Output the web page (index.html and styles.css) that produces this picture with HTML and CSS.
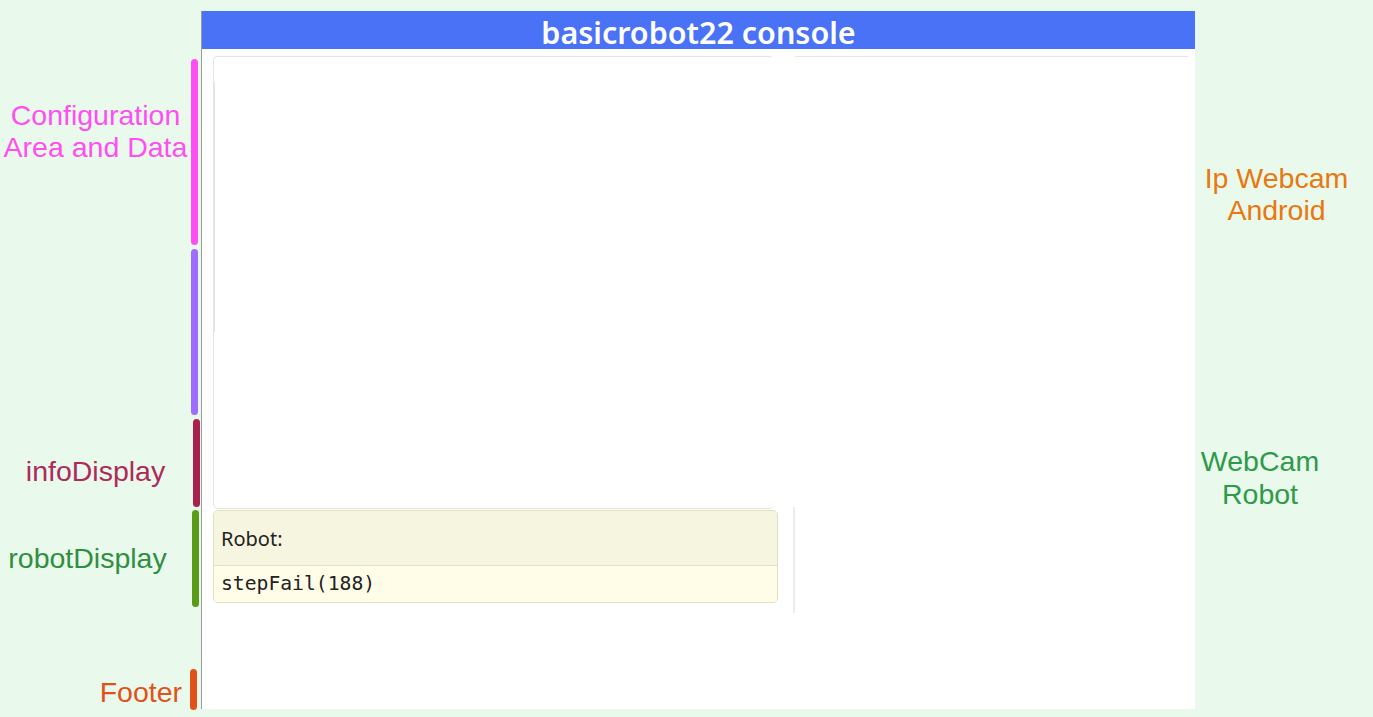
FILE: index.html
```html
<!DOCTYPE html>
<html lang="en">
<head>
<meta charset="utf-8">
<title>basicrobot22 console</title>
<link rel="stylesheet" href="styles.css">
</head>
<body>
<div class="page">
  <aside class="notes-left">
    <div class="note note-config">
      <div class="note-label">Configuration<br>Area and Data</div>
      <div class="note-bar"></div>
    </div>
    <div class="note note-data">
      <div class="note-label"></div>
      <div class="note-bar"></div>
    </div>
    <div class="note note-info">
      <div class="note-label">infoDisplay</div>
      <div class="note-bar"></div>
    </div>
    <div class="note note-robot">
      <div class="note-label">robotDisplay</div>
      <div class="note-bar"></div>
    </div>
    <div class="note note-footer">
      <div class="note-label">Footer</div>
      <div class="note-bar"></div>
    </div>
  </aside>

  <main class="console">
    <header class="console-header">basicrobot22 console</header>
    <div class="console-body">
      <section class="col-left">
        <div class="config-card">
          <div class="config-inner"></div>
        </div>
        <div class="robot-card">
          <div class="robot-head">Robot:</div>
          <div class="robot-msg">stepFail(188)</div>
        </div>
      </section>
      <section class="col-right">
        <div class="cam-top"></div>
        <div class="cam-bottom"></div>
      </section>
    </div>
  </main>

  <aside class="notes-right">
    <div class="rnote rnote-ip">Ip Webcam<br>Android</div>
    <div class="rnote rnote-robot">WebCam<br>Robot</div>
  </aside>
</div>
</body>
</html>
```

FILE: styles.css
```css
html, body {
  margin: 0;
  padding: 0;
}
body {
  background: #e9f9ec;
  width: 1373px;
  height: 717px;
  overflow: hidden;
}
.page {
  display: grid;
  grid-template-columns: 201px 994px 1fr;
  padding-top: 11px;
  height: 706px;
  box-sizing: border-box;
}

/* left annotations */
.notes-left {
  display: flex;
  flex-direction: column;
  padding-top: 48px;
  font-family: "Liberation Sans", Arial, sans-serif;
  font-size: 28.5px;
  line-height: 32px;
}
.note {
  display: flex;
}
.note-label {
  width: 191px;
  text-align: center;
}
.note-bar {
  width: 7px;
  border-radius: 4px;
}
.note-config { height: 186px; }
.note-config .note-label { padding-top: 40px; color: #ff4ff2; }
.note-config .note-bar { background: #ff4ff2; }

.note-data { height: 166px; margin-top: 4px; }
.note-data .note-bar { background: #9e6cff; }

.note-info { height: 88px; margin-top: 4px; }
.note-info .note-label { padding-top: 36px; color: #ad2a5a; }
.note-info .note-bar { background: #a8214f; margin-left: 2px; }

.note-robot { height: 97px; margin-top: 3px; }
.note-robot .note-label { padding-top: 32px; color: #2f8f40; width: 175px; margin-right: 16px; }
.note-robot .note-bar { background: #5b9b1a; margin-left: 1px; }

.note-footer { height: 41px; margin-top: 62px; }
.note-footer .note-label { padding-top: 7px; color: #e0521a; text-align: right; width: 182px; margin-right: 8px; }
.note-footer .note-bar { background: #e0521a; }

/* console */
.console {
  background: #ffffff;
  border-left: 1px solid #9c9c9c;
  height: 698px;
  display: flex;
  flex-direction: column;
}
.console-header {
  height: 38px;
  background: #4a72f7;
  color: #ffffff;
  font-family: "Noto Sans", "Open Sans", sans-serif;
  font-weight: 600;
  font-size: 30.5px;
  line-height: 43px;
  text-align: center;
}
.console-body {
  display: flex;
  gap: 15px;
  padding: 7px 0 0 11px;
}
.col-left {
  width: 565px;
  display: flex;
  flex-direction: column;
}
.config-card {
  width: 561px;
  height: 453px;
  box-sizing: border-box;
  border: 1px solid #e4e4e4;
  border-right-color: transparent;
  border-bottom-color: #e8e5cc;
  border-radius: 5px;
  padding-top: 25px;
}
.config-inner {
  height: 250px;
  border-left: 1px solid #e6e5dc;
}
.robot-card {
  margin-top: 1px;
  width: 565px;
  box-sizing: border-box;
  border: 1px solid #e2dfc2;
  border-radius: 5px;
  overflow: hidden;
  font-family: "Noto Sans", "Open Sans", sans-serif;
  color: #222222;
}
.robot-head {
  height: 55px;
  background: #f6f5df;
  border-bottom: 1px solid #e4e1c6;
  box-sizing: border-box;
  padding: 15px 0 0 7px;
  font-size: 20px;
  line-height: 26px;
}
.robot-msg {
  height: 36px;
  background: #fffde8;
  padding: 3px 0 0 7px;
  box-sizing: border-box;
  font-family: "DejaVu Sans Mono", "Liberation Mono", monospace;
  font-size: 19.7px;
  line-height: 30px;
}
.col-right {
  width: 397px;
  display: flex;
  flex-direction: column;
}
.cam-top {
  height: 450px;
  border-top: 1px solid #e6e6e6;
  margin: 0 2px 0 2px;
}
.cam-bottom {
  height: 106px;
  border-left: 2px solid #ececec;
}

/* right annotations */
.notes-right {
  display: flex;
  flex-direction: column;
  font-family: "Liberation Sans", Arial, sans-serif;
  font-size: 28.5px;
  line-height: 32px;
}
.rnote {
  text-align: center;
}
.rnote-ip {
  margin-top: 151px;
  width: 163px;
  color: #e8780f;
}
.rnote-robot {
  margin-top: 219px;
  width: 130px;
  color: #2f9a4a;
  line-height: 33px;
}
```
